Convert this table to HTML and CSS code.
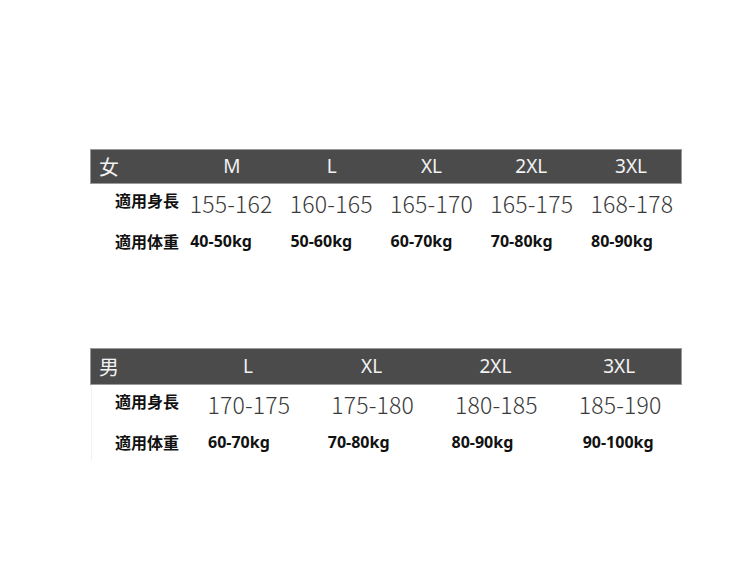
FILE: index.html
```html
<!DOCTYPE html>
<html lang="zh">
<head>
<meta charset="utf-8">
<link rel="stylesheet" href="styles.css">
</head>
<body>
<div class="page">
  <section class="table t1">
    <div class="head">
      <div class="sex">女</div>
      <div class="size">M</div>
      <div class="size">L</div>
      <div class="size">XL</div>
      <div class="size">2XL</div>
      <div class="size">3XL</div>
    </div>
    <div class="row">
      <div class="label lh">適用身長</div>
      <div class="hv">155-162</div>
      <div class="hv">160-165</div>
      <div class="hv">165-170</div>
      <div class="hv">165-175</div>
      <div class="hv">168-178</div>
    </div>
    <div class="row">
      <div class="label">適用体重</div>
      <div class="wv">40-50kg</div>
      <div class="wv">50-60kg</div>
      <div class="wv">60-70kg</div>
      <div class="wv">70-80kg</div>
      <div class="wv">80-90kg</div>
    </div>
  </section>
  <section class="table t2">
    <div class="head">
      <div class="sex">男</div>
      <div class="size">L</div>
      <div class="size">XL</div>
      <div class="size">2XL</div>
      <div class="size">3XL</div>
    </div>
    <div class="row">
      <div class="label lh">適用身長</div>
      <div class="hv">170-175</div>
      <div class="hv">175-180</div>
      <div class="hv">180-185</div>
      <div class="hv">185-190</div>
    </div>
    <div class="row">
      <div class="label">適用体重</div>
      <div class="wv">60-70kg</div>
      <div class="wv wide">70-80kg</div>
      <div class="wv wide">80-90kg</div>
      <div class="wv flat">90-100kg</div>
    </div>
  </section>
</div>
</body>
</html>
```

FILE: styles.css
```css
html, body {
  margin: 0;
  padding: 0;
  background: #ffffff;
}
body {
  width: 750px;
  height: 576px;
  overflow: hidden;
  font-family: "Noto Sans", "Noto Sans CJK SC", sans-serif;
}
.page {
  padding: 149px 0 0 90px;
}
.table {
  width: 592px;
}
.t2 {
  margin-top: 88px;
}
.head, .row {
  display: grid;
  align-items: center;
}
.t1 .head, .t1 .row {
  grid-template-columns: 91px repeat(5, 1fr);
}
.t2 .head, .t2 .row {
  grid-template-columns: 95px repeat(4, 1fr);
}
.head {
  background: #4b4b4b;
  border: 1px solid #9a9a9a;
  box-sizing: border-box;
  height: 35px;
  color: #f2f2f2;
}
.t2 .head {
  height: 37px;
}
.sex {
  font-family: "Noto Sans CJK SC", sans-serif;
  font-size: 20px;
  padding-left: 8px;
  line-height: 1;
}
.size {
  text-align: center;
  font-size: 19px;
  line-height: 1;
}
.row {
  height: 38px;
}
.t2 .row {
  border-left: 1px solid #f2f2f2;
  margin-left: 1px;
}
.label {
  font-family: "Noto Sans CJK SC", sans-serif;
  font-weight: 700;
  font-size: 16px;
  color: #111;
  padding-left: 25px;
  line-height: 1;
  white-space: nowrap;
}
.t2 .label {
  padding-left: 23px;
}
.lh {
  padding-bottom: 7px;
}
.hv {
  text-align: center;
  font-family: "Noto Sans CJK SC", sans-serif;
  font-weight: 300;
  font-size: 23px;
  color: #3a3a3a;
  line-height: 1;
  letter-spacing: 0.2px;
}
.wv {
  text-align: center;
  font-weight: 700;
  font-size: 16px;
  color: #111;
  line-height: 1;
  padding-right: 20px;
}
.wv.wide {
  padding-right: 28px;
}
.wv.flat {
  padding-right: 4px;
}
```
